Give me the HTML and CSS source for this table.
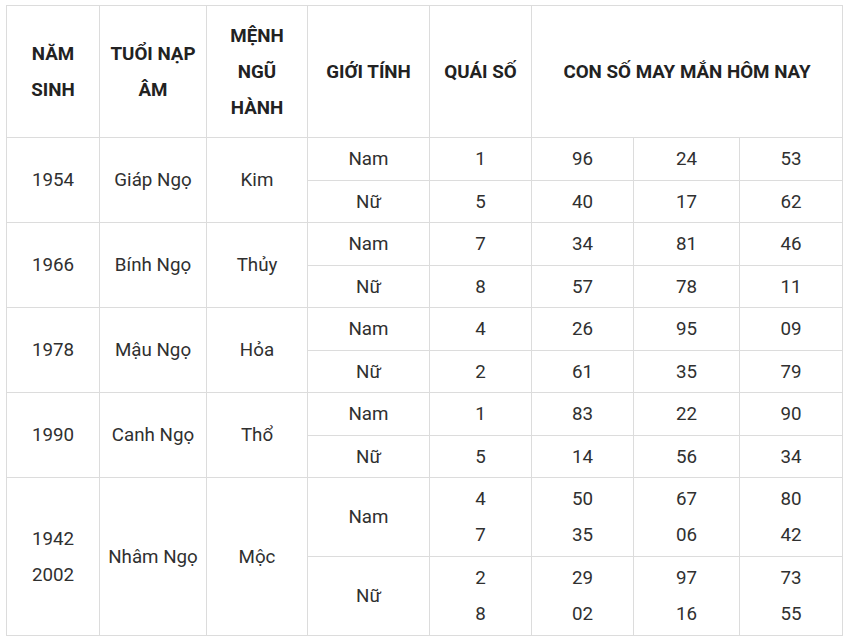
FILE: index.html
```html
<!DOCTYPE html>
<html lang="vi">
<head>
<meta charset="utf-8">
<link rel="stylesheet" href="styles.css">
</head>
<body>
<div class="wrap">
<table class="lucky">
<colgroup>
<col class="c1"><col class="c2"><col class="c3"><col class="c4"><col class="c5"><col class="c6"><col class="c7"><col class="c8">
</colgroup>
<thead>
<tr class="head">
<th>NĂM<br>SINH</th>
<th>TUỔI NẠP<br>ÂM</th>
<th>MỆNH<br>NGŨ<br>HÀNH</th>
<th>GIỚI TÍNH</th>
<th>QUÁI SỐ</th>
<th colspan="3">CON SỐ MAY MẮN HÔM NAY</th>
</tr>
</thead>
<tbody>
<tr class="r1"><td rowspan="2" class="y1954">1954</td><td rowspan="2">Giáp Ngọ</td><td rowspan="2">Kim</td><td>Nam</td><td>1</td><td>96</td><td>24</td><td>53</td></tr>
<tr class="r2"><td>Nữ</td><td>5</td><td>40</td><td>17</td><td>62</td></tr>
<tr class="r1"><td rowspan="2" class="y1966">1966</td><td rowspan="2">Bính Ngọ</td><td rowspan="2">Thủy</td><td>Nam</td><td>7</td><td>34</td><td>81</td><td>46</td></tr>
<tr class="r2"><td>Nữ</td><td>8</td><td>57</td><td>78</td><td>11</td></tr>
<tr class="r1"><td rowspan="2">1978</td><td rowspan="2">Mậu Ngọ</td><td rowspan="2">Hỏa</td><td>Nam</td><td>4</td><td>26</td><td>95</td><td>09</td></tr>
<tr class="r2"><td>Nữ</td><td>2</td><td>61</td><td>35</td><td>79</td></tr>
<tr class="r1"><td rowspan="2">1990</td><td rowspan="2">Canh Ngọ</td><td rowspan="2">Thổ</td><td>Nam</td><td>1</td><td>83</td><td>22</td><td>90</td></tr>
<tr class="r2"><td>Nữ</td><td>5</td><td>14</td><td>56</td><td>34</td></tr>
<tr class="r3"><td rowspan="2">1942<br>2002</td><td rowspan="2">Nhâm Ngọ</td><td rowspan="2">Mộc</td><td>Nam</td><td>4<br>7</td><td>50<br>35</td><td>67<br>06</td><td>80<br>42</td></tr>
<tr class="r3"><td>Nữ</td><td>2<br>8</td><td>29<br>02</td><td>97<br>16</td><td>73<br>55</td></tr>
</tbody>
</table>
</div>
</body>
</html>
```
FILE: styles.css
```css
html, body {
  margin: 0;
  padding: 0;
  background: #ffffff;
}
.wrap {
  padding: 5px 0 0 6px;
}
.lucky {
  border-collapse: collapse;
  table-layout: fixed;
  width: 836px;
  font-family: Roboto, "Liberation Sans", sans-serif;
  font-size: 18.75px;
  color: #303030;
}
.c1 { width: 93px; }
.c2 { width: 107px; }
.c3 { width: 101px; }
.c4 { width: 122px; }
.c5 { width: 102px; }
.c6 { width: 102px; }
.c7 { width: 106px; }
.c8 { width: 103px; }
.lucky th,
.lucky td {
  border: 1px solid #dcdcdc;
  text-align: center;
  vertical-align: middle;
  padding: 0 2px;
  line-height: 36px;
}
.lucky th {
  font-weight: 700;
  color: #222222;
}
.head { height: 132px; }
.r1 { height: 43px; }
.r2 { height: 42px; }
.r3 { height: 79px; }
.y1954 { padding-left: 7px; }
.y1966 { padding-right: 5px; }
```
